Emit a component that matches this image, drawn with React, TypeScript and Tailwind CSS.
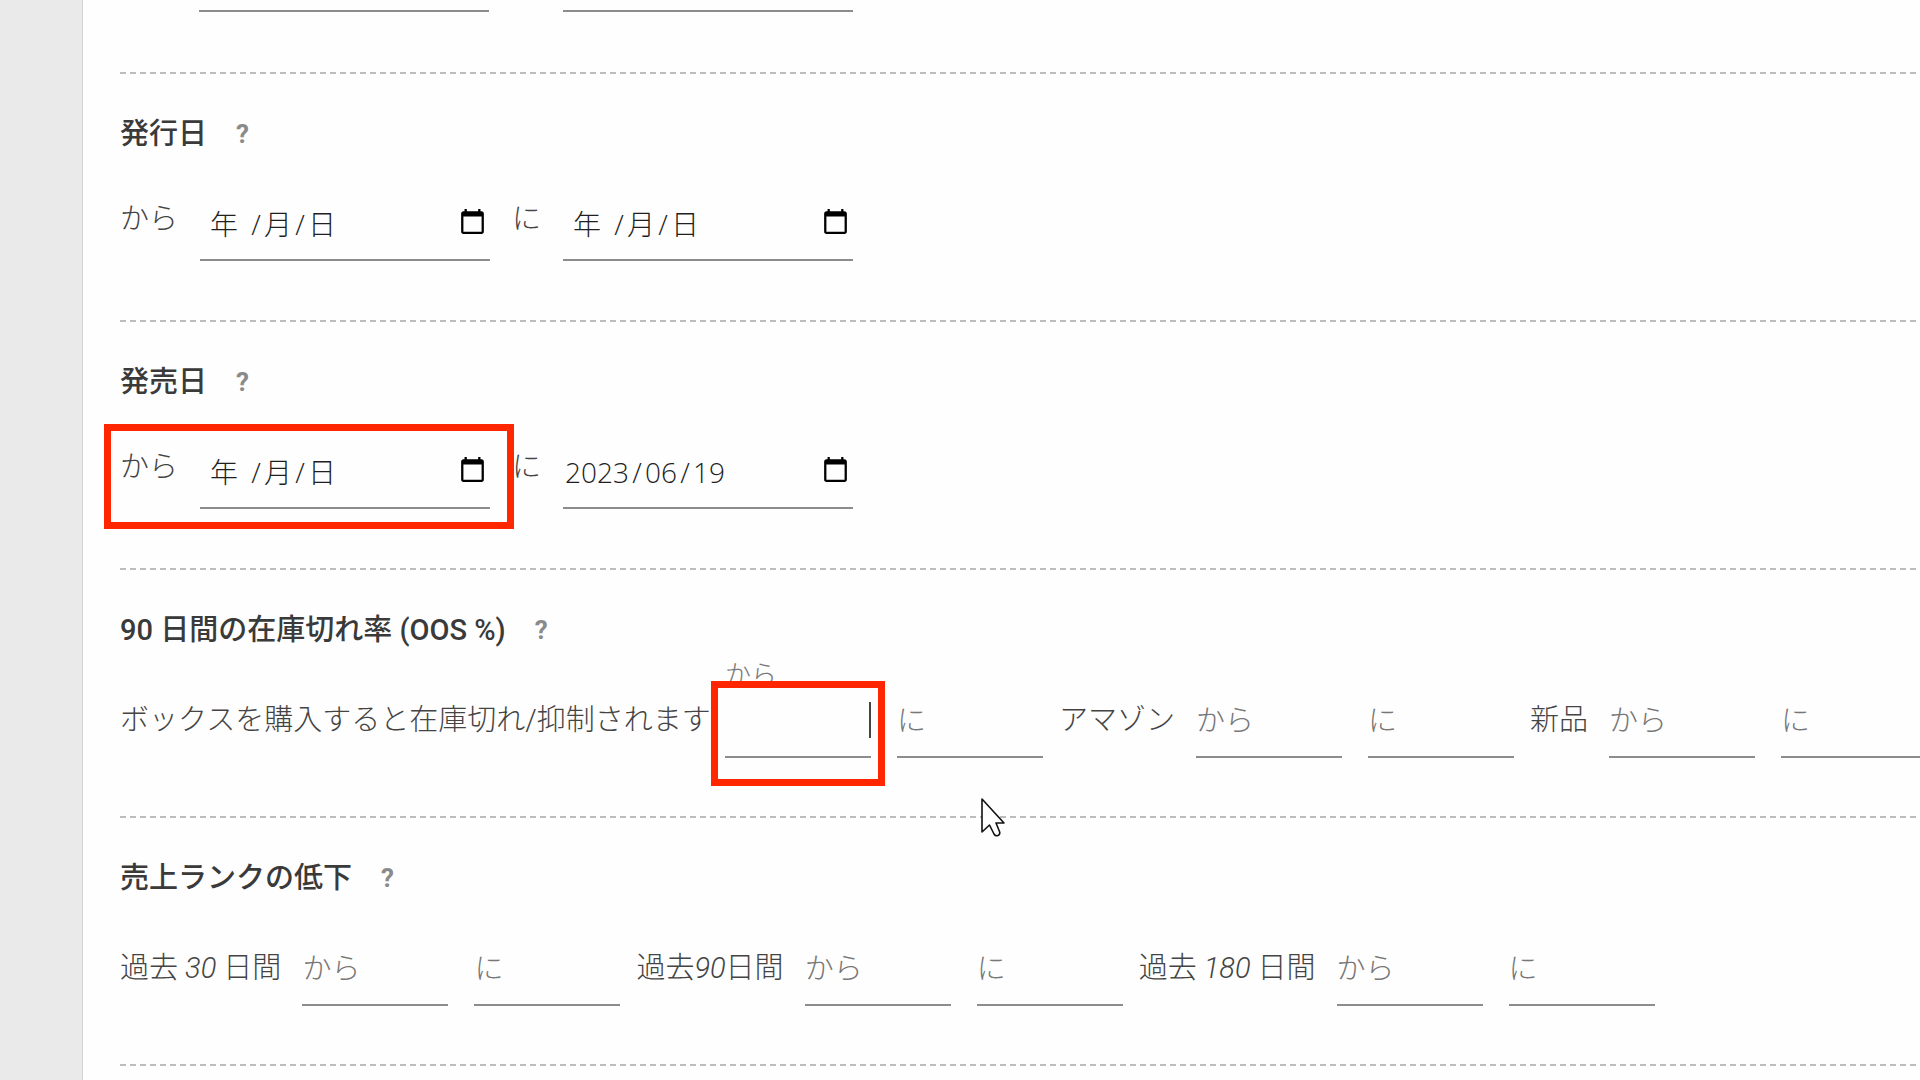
import React from "react";

/* -------------------------------------------------------------------------- */
/*                                   Shared                                   */
/* -------------------------------------------------------------------------- */

function Divider() {
  return (
    <hr className="h-0.5 border-0 bg-[repeating-linear-gradient(90deg,#bdbdbd_0_6px,transparent_6px_10px)]" />
  );
}

function Highlight({ className }: { className: string }) {
  return (
    <span
      aria-hidden="true"
      className={`pointer-events-none absolute border-[7px] border-[#ff2600] ${className}`}
    />
  );
}

function CalendarIcon() {
  return (
    <svg viewBox="2 1 20 22" className="h-[25px] w-[23px]" fill="#000">
      <path d="M20 3h-1V1h-2v2H7V1H5v2H4c-1.1 0-2 .9-2 2v16c0 1.1.9 2 2 2h16c1.1 0 2-.9 2-2V5c0-1.1-.9-2-2-2zm0 18H4V7.500h16z" />
    </svg>
  );
}

function Pointer() {
  return (
    <svg
      aria-hidden="true"
      viewBox="0 0 25 40"
      className="pointer-events-none absolute left-[980px] top-[797px] h-10 w-[25px]">
      <path
        d="M2 2v33l7.500-7 4.500 9q1.500 2.500 4 1.500t1.500-4L16 26h8z"
        fill="#fff"
        stroke="#111"
        strokeWidth="1.6"
        strokeLinejoin="round"
      />
    </svg>
  );
}

type SectionProps = {
  title: string;
  children: React.ReactNode;
};

function Section({ title, children }: SectionProps) {
  return (
    <section>
      <Divider />
      <div className="flex h-[76px] items-end gap-[29px] leading-8">
        <h2 className="whitespace-nowrap font-medium text-[#3a3a3a]">{title}</h2>
        <button
          type="button"
          aria-label={`${title} ヘルプ`}
          className="text-[26px] font-bold text-[#8a8a8a]">
          ?
        </button>
      </div>
      <div className="mt-12 flex pb-[58px]">{children}</div>
    </section>
  );
}

/* -------------------------------------------------------------------------- */
/*                                 Date fields                                */
/* -------------------------------------------------------------------------- */

type DateFieldProps = {
  id: string;
  value?: [string, string, string];
};

function DateField({ id, value }: DateFieldProps) {
  const [year, month, day] = value ?? ["", "", ""];
  const part =
    "bg-transparent p-0 outline-none placeholder:text-[#1f1f1f] placeholder:opacity-100";

  return (
    <div className="flex h-[63px] w-[290px] shrink-0 items-center border-b-2 border-[#8c8c8c] pb-2.5 pr-1.5 font-['Open_Sans','Noto_Sans_CJK_JP',sans-serif] text-[28px] text-[#1f1f1f]">
      <input
        id={id}
        type="text"
        defaultValue={year}
        placeholder="年"
        className={`${part} ${value ? "w-[66px] pl-0.5" : "w-12 text-center"}`}
      />
      <span className="w-4 text-center">/</span>
      <input
        type="text"
        aria-label="月"
        defaultValue={month}
        placeholder="月"
        className={`${part} ${value ? "w-8" : "w-7"}`}
      />
      <span className="w-4 text-center">/</span>
      <input
        type="text"
        aria-label="日"
        defaultValue={day}
        placeholder="日"
        className={`${part} ${value ? "w-8" : "w-7"}`}
      />
      <button type="button" aria-label="カレンダー" className="mb-1 ml-auto">
        <CalendarIcon />
      </button>
    </div>
  );
}

type DateRangeProps = {
  name: string;
  to?: [string, string, string];
  highlighted?: boolean;
};

function DateRange({ name, to, highlighted }: DateRangeProps) {
  return (
    <div className="mb-px flex gap-[22px] font-light">
      <div className="relative flex gap-[22px]">
        <label htmlFor={`${name}-from`} className="h-11 leading-[42px]">
          から
        </label>
        <DateField id={`${name}-from`} />
        {highlighted && (
          <Highlight className="-bottom-5 -left-4 -right-6 -top-[22px]" />
        )}
      </div>
      <label htmlFor={`${name}-to`} className="h-11 leading-[42px]">
        に
      </label>
      <DateField id={`${name}-to`} value={to} />
    </div>
  );
}

/* -------------------------------------------------------------------------- */
/*                                Number fields                               */
/* -------------------------------------------------------------------------- */

type NumberFieldProps = {
  label: string;
  active?: boolean;
};

function NumberField({ label, active }: NumberFieldProps) {
  return (
    <div className="relative w-[146px] shrink-0">
      {active && (
        <span className="absolute -top-[35px] left-0 text-[26px] leading-8 text-[#777]">
          {label}
        </span>
      )}
      <input
        type="text"
        inputMode="numeric"
        aria-label={label}
        placeholder={active ? "" : label}
        className="block h-16 w-full border-b-2 border-[#8c8c8c] bg-transparent pb-2 font-light outline-none placeholder:text-[#777] placeholder:opacity-100"
      />
      {active && (
        <>
          <span className="absolute right-0 top-2 h-9 w-0.5 bg-[#444]" />
          <Highlight className="-bottom-7 -left-3.5 -right-3.5 -top-[13px]" />
        </>
      )}
    </div>
  );
}

type NumberRangeProps = {
  children: React.ReactNode;
  labelClass?: string;
  active?: boolean;
};

function NumberRange({ children, labelClass = "", active }: NumberRangeProps) {
  return (
    <div role="group" className="flex shrink-0">
      <span
        className={`mr-[21px] h-[52px] whitespace-pre leading-[52px] ${labelClass}`}>
        {children}
      </span>
      <div className="flex gap-[26px]">
        <NumberField label="から" active={active} />
        <NumberField label="に" />
      </div>
    </div>
  );
}

/* -------------------------------------------------------------------------- */
/*                                     App                                    */
/* -------------------------------------------------------------------------- */

export default function App() {
  return (
    <div
      lang="ja"
      className="relative flex min-h-screen overflow-hidden bg-[#eaeaea] font-[Roboto,'Noto_Sans_CJK_JP',sans-serif] text-[29px] text-[#444]">
      <main className="ml-[82px] min-w-0 flex-1 border-l border-[#d4d4d4] bg-[#fefefe] pl-[37px]">
        {/* End of the previous filter */}
        <div className="flex h-[72px] gap-[74px] pl-[79px]">
          <div className="h-3 w-[290px] border-b-2 border-[#8c8c8c]" />
          <div className="h-3 w-[290px] border-b-2 border-[#8c8c8c]" />
        </div>

        <Section title="発行日">
          <DateRange name="published" />
        </Section>

        <Section title="発売日">
          <DateRange name="released" to={["2023", "06", "19"]} highlighted />
        </Section>

        <Section title="90 日間の在庫切れ率 (OOS %)">
          <div className="flex gap-4 font-light">
            <NumberRange labelClass="w-[584px]" active>
              ボックスを購入すると在庫切れ/抑制されます
            </NumberRange>
            <NumberRange>アマゾン</NumberRange>
            <NumberRange>新品</NumberRange>
          </div>
        </Section>

        <Section title="売上ランクの低下">
          <div className="flex gap-4 font-light">
            <NumberRange>
              過去 <i>30</i> 日間
            </NumberRange>
            <NumberRange>
              過去<i>90</i>日間
            </NumberRange>
            <NumberRange>
              過去 <i>180</i> 日間
            </NumberRange>
          </div>
        </Section>

        <Divider />
      </main>

      <Pointer />
    </div>
  );
}
